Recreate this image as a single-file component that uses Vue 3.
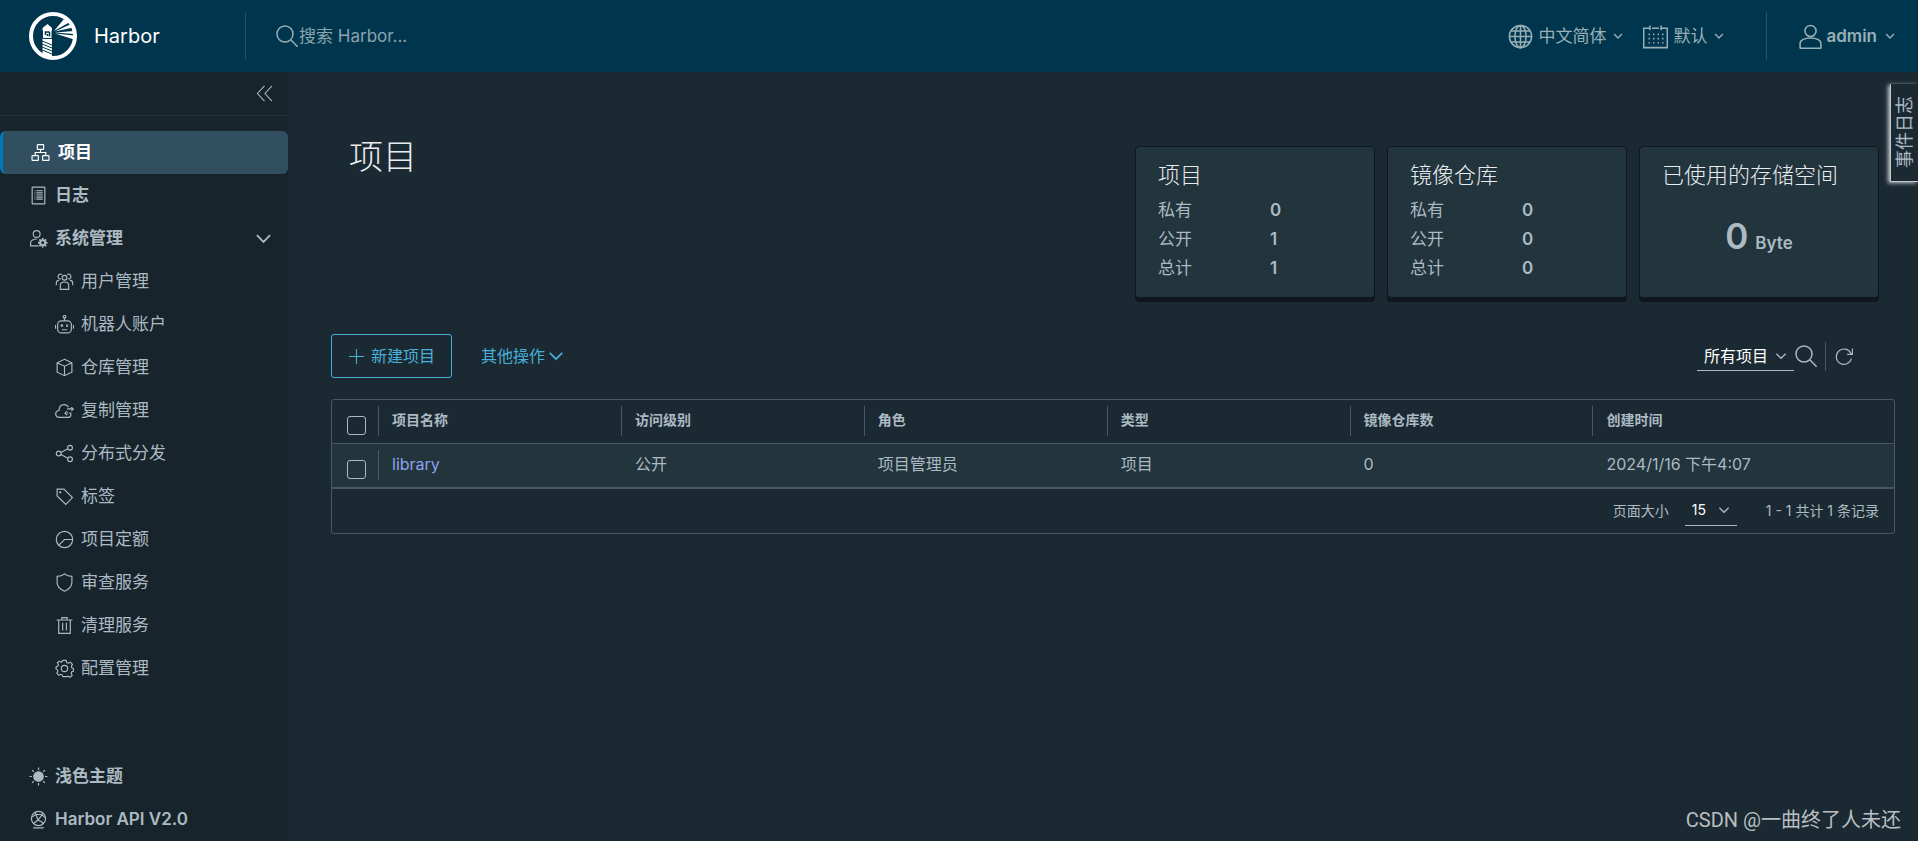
<script setup>
import { ref } from 'vue'

const icons = {
  organization:
    '<rect x="12" y="3" width="12" height="9" rx="1"/><rect x="2" y="24" width="12" height="9" rx="1"/><rect x="22" y="24" width="12" height="9" rx="1"/><path d="M18 12v6M8 24v-6h20v6"/>',
  log:
    '<rect x="6" y="2" width="24" height="32" rx="1"/><path d="M14 9h12M14 13h12M14 17h12M14 21h12M14 25h12M10.500 9h1.500M10.500 13h1.500M10.500 17h1.500M10.500 21h1.500M10.500 25h1.500"/>',
  admin:
    '<circle cx="14.500" cy="9.500" r="6.500"/><path d="M18 32H3v-6c0-4 6-7 12-7"/><circle cx="26" cy="26" r="4.500" stroke-width="3.500"/><path stroke-width="3.500" d="M26 17v4M26 31v4M17 26h4M31 26h4M19.600 19.600l3 3M29.400 29.400l3 3M19.600 32.400l3-3M29.400 22.600l3-3"/>',
  users:
    '<circle cx="18" cy="11" r="4.500"/><path d="M10 33v-8c0-4 3-6 8-6s8 2 8 6v8z"/><path d="M11 13a4.500 4.500 0 1 1 2-8M25 13a4.500 4.500 0 1 0-2-8M2.500 25v-4c0-3 2-5 5.500-5.500M33.500 25v-4c0-3-2-5-5.500-5.500"/>',
  robot:
    '<circle cx="18" cy="3.500" r="2.500"/><path d="M18 6v5M12 11h12a7 7 0 0 1 7 7v9a7 7 0 0 1-7 7H12a7 7 0 0 1-7-7v-9a7 7 0 0 1 7-7zM1 19v7M35 19v7M13 28h10"/><circle cx="13" cy="20" r="1.500"/><path d="M21.500 18l3 4M24.500 18l-3 4"/>',
  box:
    '<path d="M18 2.500l14 6.500v18l-14 6.500L4 27V9zM4 9l14 6.500L32 9M18 15.500v18"/>',
  cloud:
    '<path d="M30 22v4a5 5 0 0 1-5 5H8a6.500 6.500 0 0 1-.5-13C8 11 12 7 17 7c4 0 7 2 8.500 5"/><path d="M23 15h11M31 11.500l3.500 3.500-3.500 3.500M19 23h2M23 23h2M27 23h2M23 19.500L19 23l4 3.500"/>',
  share:
    '<circle cx="7" cy="18" r="4.500"/><circle cx="28.500" cy="7" r="4.500"/><circle cx="28.500" cy="29" r="4.500"/><path d="M11 16l13.500-7M11 20l13.500 7"/>',
  tag:
    '<path d="M4 4h13l16 16-12.500 13L4 17z"/><circle cx="10" cy="10" r="1"/>',
  quota:
    '<circle cx="18" cy="18" r="15.500"/><path d="M33.500 18H18L7 29"/>',
  shield:
    '<path d="M18 2c4 3 9 4.500 14 4.500V18c0 8-6 13-14 16.500C10 31 4 26 4 18V6.500C9 6.500 14 5 18 2z"/>',
  trash:
    '<path d="M3 7.500h30M7 7.500V33h22V7.500M13 7V3h10v4M14.500 13v14.500M21.500 13v14.500"/>',
  cog:
    '<circle cx="18" cy="18" r="6"/><path d="M15 2.500h6l1.500 4.500 2.500 1 4-2 4 4-2 4 1 3 3 1v5l-3.500 1.500-1 2.500 2 4-4 3.500-4-2-2.500 1L20 33.500h-5L13.500 30l-2.500-1-4 2-3.500-4 2-4-1-2.500L2 19v-4l3.500-1.500 1-2.500-2-4 4-3 3.500 2z"/>',
  sun:
    '<circle cx="18" cy="18" r="9" fill="currentColor"/><path d="M18 1v4.500M18 30.500V35M1 18h4.500M30.500 18H35M6 6l3 3M27 27l3 3M6 30l3-3M27 9l3-3"/>',
  api:
    '<circle cx="18" cy="16" r="13.500"/><path d="M5 14l8-6 12 1 6 6M13 8l4 11-9 7M25 9l-8 10 10 5M11 4l2 4M25 9l1-3M27 24l-2 3M8 34h20"/>',
  search: '<circle cx="15" cy="15" r="12"/><path d="M24 24l10 10"/>',
  globe:
    '<circle cx="18" cy="18" r="16"/><ellipse cx="18" cy="18" rx="8" ry="16"/><path d="M18 2v32M2 18h32M5 10h26M5 26h26"/>',
  calendar:
    '<path d="M9 6H1v28h34V6h-8M13 6h10M10 2v7M26 2v7"/><path stroke-dasharray="2 4.500" stroke-width="2.500" d="M8 15h22M8 21h22M8 27h22"/>',
  user:
    '<circle cx="18" cy="10" r="8"/><path d="M3 34v-6c0-5 7-8 15-8s15 3 15 8v6q0 1-1 1H4q-1 0-1-1z"/>',
  angle: '<path d="M4 11l14 14 14-14"/>',
  collapse: '<path d="M18 2L3 18l15 16M34 2L19 18l15 16"/>',
  plus: '<path d="M18 2v32M2 18h32"/>',
  refresh: '<path d="M31 22a14.500 14.500 0 1 1-1-10l3 2M33 3v11H23"/>',
}

const adminItems = [
  { icon: 'users', label: '用户管理' },
  { icon: 'robot', label: '机器人账户' },
  { icon: 'box', label: '仓库管理' },
  { icon: 'cloud', label: '复制管理' },
  { icon: 'share', label: '分布式分发' },
  { icon: 'tag', label: '标签' },
  { icon: 'quota', label: '项目定额' },
  { icon: 'shield', label: '审查服务' },
  { icon: 'trash', label: '清理服务' },
  { icon: 'cog', label: '配置管理' },
]

const stats = [
  { title: '项目', rows: [['私有', 0], ['公开', 1], ['总计', 1]] },
  { title: '镜像仓库', rows: [['私有', 0], ['公开', 0], ['总计', 0]] },
]

const columns = ['项目名称', '访问级别', '角色', '类型', '镜像仓库数', '创建时间']
const projects = [
  { name: 'library', access: '公开', role: '项目管理员', type: '项目', repos: 0, created: '2024/1/16 下午4:07' },
]

const adminOpen = ref(true)
const query = ref('')
const filter = ref('所有项目')
const pageSize = ref('15')
</script>

<template>
  <div class="app">
    <header class="topbar">
      <a class="brand" href="#">
        <svg class="logo" viewBox="0 0 48 48" aria-hidden="true">
          <circle cx="24" cy="24" r="22" fill="none" stroke="#fff" stroke-width="4" />
          <path fill="#fff" d="M18.500 12l4.500 4v2.500h-.5v7.500l.5 1v18h-9.500V27l.5-1v-7.500h-.5V16z" />
          <path fill="none" stroke="#00364d" stroke-width="1.500" d="M20.500 20H16.500v3M20.500 20v4.500M18.500 24v-2" />
          <path fill="none" stroke="#00364d" stroke-width="1" d="M14 26.500h9M13 29l10 4M13 32l10 4M13 35l10 4M13 38l10 4" />
          <path fill="#fff" d="M25 19L35 7l6 3zM26 19.500l16-7.500 2 3.500zM26 20.500l19-1.500v3zM26 21.500l19 2v4z" />
        </svg>
        <span>Harbor</span>
      </a>
      <label class="search">
        <svg class="ico ico-l" viewBox="0 0 36 36" aria-hidden="true" v-html="icons.search" />
        <input v-model="query" type="text" placeholder="搜索 Harbor..." aria-label="搜索 Harbor" />
      </label>
      <button class="menu" type="button">
        <svg class="ico ico-xl" viewBox="0 0 36 36" aria-hidden="true" v-html="icons.globe" />
        <span>中文简体</span>
        <svg class="ico caret" viewBox="0 0 36 36" aria-hidden="true" v-html="icons.angle" />
      </button>
      <button class="menu" type="button">
        <svg class="ico ico-xl" viewBox="0 0 36 36" aria-hidden="true" v-html="icons.calendar" />
        <span>默认</span>
        <svg class="ico caret" viewBox="0 0 36 36" aria-hidden="true" v-html="icons.angle" />
      </button>
      <div class="account">
        <button class="menu" type="button">
          <svg class="ico ico-xl" viewBox="0 0 36 36" aria-hidden="true" v-html="icons.user" />
          <span class="name">admin</span>
          <svg class="ico caret" viewBox="0 0 36 36" aria-hidden="true" v-html="icons.angle" />
        </button>
      </div>
    </header>

    <div class="body">
      <nav class="sidebar">
        <div class="collapse">
          <button type="button" aria-label="收起">
            <svg class="ico ico-s" viewBox="0 0 36 36" aria-hidden="true" v-html="icons.collapse" />
          </button>
        </div>
        <a class="item active" href="#">
          <svg class="ico" viewBox="0 0 36 36" aria-hidden="true" v-html="icons.organization" />
          <span>项目</span>
        </a>
        <a class="item" href="#">
          <svg class="ico" viewBox="0 0 36 36" aria-hidden="true" v-html="icons.log" />
          <span>日志</span>
        </a>
        <button class="item" type="button" :aria-expanded="adminOpen" @click="adminOpen = !adminOpen">
          <svg class="ico" viewBox="0 0 36 36" aria-hidden="true" v-html="icons.admin" />
          <span>系统管理</span>
          <svg class="ico ico-s bold end" viewBox="0 0 36 36" aria-hidden="true" v-html="icons.angle" />
        </button>
        <div v-show="adminOpen" class="sub">
          <a v-for="item in adminItems" :key="item.label" class="item child" href="#">
            <svg class="ico" viewBox="0 0 36 36" aria-hidden="true" v-html="icons[item.icon]" />
            <span>{{ item.label }}</span>
          </a>
        </div>
        <div class="foot">
          <button class="item" type="button">
            <svg class="ico" viewBox="0 0 36 36" aria-hidden="true" v-html="icons.sun" />
            <span>浅色主题</span>
          </button>
          <a class="item" href="#">
            <svg class="ico" viewBox="0 0 36 36" aria-hidden="true" v-html="icons.api" />
            <span>Harbor API V2.0</span>
          </a>
        </div>
      </nav>

      <main class="main">
        <section class="summary">
          <h1>项目</h1>
          <div class="cards">
            <article v-for="card in stats" :key="card.title" class="card">
              <h2>{{ card.title }}</h2>
              <dl>
                <template v-for="[label, value] in card.rows" :key="label">
                  <dt>{{ label }}</dt>
                  <dd>{{ value }}</dd>
                </template>
              </dl>
            </article>
            <article class="card">
              <h2>已使用的存储空间</h2>
              <p class="storage"><strong>0</strong><span>Byte</span></p>
            </article>
          </div>
        </section>

        <div class="toolbar">
          <button class="create" type="button">
            <svg class="ico ico-s" viewBox="0 0 36 36" aria-hidden="true" v-html="icons.plus" />
            <span>新建项目</span>
          </button>
          <button class="more" type="button">
            <span>其他操作</span>
            <svg class="ico ico-xs bold" viewBox="0 0 36 36" aria-hidden="true" v-html="icons.angle" />
          </button>
          <div class="tools">
            <div class="select filter">
              <select v-model="filter" aria-label="项目筛选">
                <option>所有项目</option>
              </select>
              <svg class="ico caret-m" viewBox="0 0 36 36" aria-hidden="true" v-html="icons.angle" />
            </div>
            <button type="button" aria-label="搜索">
              <svg class="ico ico-l" viewBox="0 0 36 36" aria-hidden="true" v-html="icons.search" />
            </button>
            <button class="refresh" type="button" aria-label="刷新">
              <svg class="ico" viewBox="0 0 36 36" aria-hidden="true" v-html="icons.refresh" />
            </button>
          </div>
        </div>

        <div class="grid">
          <table>
            <colgroup>
              <col class="c-check" />
              <col v-for="n in 5" :key="n" class="c-data" />
              <col />
            </colgroup>
            <thead>
              <tr>
                <th class="check"><input type="checkbox" aria-label="全选" /></th>
                <th v-for="c in columns" :key="c" scope="col">{{ c }}</th>
              </tr>
            </thead>
            <tbody>
              <tr v-for="p in projects" :key="p.name">
                <td class="check"><input type="checkbox" :aria-label="p.name" /></td>
                <td class="first"><a href="#">{{ p.name }}</a></td>
                <td>{{ p.access }}</td>
                <td>{{ p.role }}</td>
                <td>{{ p.type }}</td>
                <td>{{ p.repos }}</td>
                <td>{{ p.created }}</td>
              </tr>
            </tbody>
          </table>
          <div class="pager">
            <label for="page-size">页面大小</label>
            <div class="select size">
              <select id="page-size" v-model="pageSize">
                <option>15</option>
              </select>
              <svg class="ico caret-m" viewBox="0 0 36 36" aria-hidden="true" v-html="icons.angle" />
            </div>
            <span>1 - 1 共计 1 条记录</span>
          </div>
        </div>
      </main>
    </div>

    <button class="events" type="button">事件日志</button>
    <div class="watermark">CSDN @一曲终了人未还</div>
  </div>
</template>

<style>
body {
  margin: 0;
  background: #1b2a32;
}
</style>

<style scoped>
.app {
  position: relative;
  display: flex;
  flex-direction: column;
  min-height: 100vh;
  overflow: hidden;
  background: #1b2a32;
  color: #acbac3;
  font: 16px/24px Inter, "Noto Sans CJK SC", sans-serif;
}
*,
*::before {
  box-sizing: border-box;
}
a {
  color: inherit;
  text-decoration: none;
}
button {
  padding: 0;
  border: 0;
  background: none;
  color: inherit;
  font: inherit;
  cursor: pointer;
}
.ico {
  flex: none;
  display: block;
  width: 19px;
  height: 19px;
  fill: none;
  stroke: currentColor;
  stroke-width: 2.2;
}
.ico-xs { width: 16px; height: 16px; }
.ico-s { width: 17px; height: 17px; }
.ico-l { width: 24px; height: 24px; }
.ico-xl { width: 25px; height: 25px; }
.bold { stroke-width: 4; }
.caret { width: 10px; height: 10px; stroke-width: 5; }
.caret-m { width: 12px; height: 12px; stroke-width: 4; }

/* top bar */
.topbar {
  display: flex;
  align-items: center;
  height: 72px;
  padding-right: 23px;
  background: #00364d;
  color: #99afb8;
  font-size: 17px;
}
.brand {
  flex: none;
  display: flex;
  align-items: center;
  gap: 17px;
  width: 246px;
  height: 48px;
  padding-left: 29px;
  border-right: 1px solid #1f4f63;
  color: #fff;
  font-size: 20px;
}
.logo {
  width: 48px;
  height: 48px;
}
.search {
  flex: 1;
  display: flex;
  align-items: center;
  padding-left: 29px;
}
.search input {
  flex: 1;
  min-width: 0;
  padding: 0;
  border: 0;
  outline: 0;
  background: none;
  color: inherit;
  font: inherit;
}
.search input::placeholder {
  color: #8aa3ae;
  opacity: 1;
}
.menu {
  display: flex;
  align-items: center;
  gap: 5px;
  margin-left: 20px;
}
.menu .caret {
  margin-left: 2px;
}
.menu .name {
  font-weight: 600;
}
.account {
  display: flex;
  align-items: center;
  height: 48px;
  margin-left: 42px;
  border-left: 1px solid #27546a;
}
.account .menu {
  gap: 3px;
  margin-left: 31px;
}
.account .caret {
  margin-left: 5px;
}

/* sidebar */
.body {
  flex: 1;
  display: flex;
}
.sidebar {
  flex: none;
  display: flex;
  flex-direction: column;
  width: 288px;
  background: #17242b;
}
.collapse {
  display: flex;
  align-items: center;
  justify-content: flex-end;
  height: 44px;
  margin-bottom: 15px;
  padding: 0 15px;
  border-bottom: 1px solid #22333c;
}
.item {
  display: flex;
  align-items: center;
  gap: 7px;
  width: 100%;
  height: 43px;
  padding: 0 16px 1px 29px;
  font-size: 17px;
  font-weight: 600;
  text-align: left;
}
.active {
  gap: 8px;
  border-left: 3px solid #0079b8;
  border-radius: 6px;
  padding-left: 28px;
  background: #324f62;
  color: #fff;
}
.end {
  margin-left: auto;
}
.sub {
  padding: 0 0 1px;
}
.child {
  padding-left: 55px;
  font-weight: 400;
}
.foot {
  margin-top: auto;
}

/* content */
.main {
  flex: 1;
  min-width: 0;
  padding: 74px 23px 0 43px;
}
.summary {
  display: flex;
  align-items: flex-start;
  justify-content: space-between;
  padding: 0 16px 0 18px;
}
h1 {
  margin: 0;
  color: #e9ecef;
  font-size: 34px;
  font-weight: 300;
  line-height: 22px;
}
.cards {
  display: flex;
  gap: 12px;
}
.card {
  width: 240px;
  min-height: 152px;
  padding: 11px 22px;
  border: 1px solid #0f171c;
  border-radius: 4px;
  background: #22343c;
  box-shadow: 0 4px 0 #0f171c;
}
h2 {
  margin: 0 0 3px;
  color: #e9ecef;
  font-size: 22px;
  font-weight: 300;
  line-height: 34px;
  white-space: nowrap;
}
dl {
  display: grid;
  grid-template-columns: 112px 1fr;
  grid-auto-rows: 29px;
  align-items: center;
  margin: 0;
  font-size: 17px;
}
dd {
  margin: 0;
  font-weight: 600;
}
.storage {
  display: flex;
  align-items: baseline;
  justify-content: center;
  gap: 7px;
  margin: 20px 0 0;
  font-size: 17px;
  font-weight: 600;
  line-height: 48px;
}
.storage strong {
  font-size: 35px;
  font-weight: 600;
}

.toolbar {
  display: flex;
  align-items: center;
  margin: 36px 0 21px;
}
.create,
.more {
  display: flex;
  align-items: center;
  color: #49afd9;
  font-size: 16px;
}
.create {
  gap: 6px;
  height: 44px;
  padding: 0 16px;
  border: 1px solid #49afd9;
  border-radius: 3px;
}
.more {
  gap: 3px;
  margin-left: 29px;
}
.tools {
  display: flex;
  align-items: center;
  margin-left: auto;
  padding-right: 41px;
}
.select {
  display: grid;
  align-items: center;
  border-bottom: 1px solid #acbac3;
}
.select > * {
  grid-area: 1 / 1;
}
.select svg {
  justify-self: end;
  margin-right: 7px;
  pointer-events: none;
}
.select select {
  width: 100%;
  height: 29px;
  padding: 0 7px;
  appearance: none;
  border: 0;
  background: none;
  color: #fff;
  font: inherit;
}
.filter {
  width: 97px;
}
.refresh {
  display: flex;
  align-items: center;
  height: 29px;
  margin-left: 7px;
  padding-left: 9px;
  border-left: 1px solid #485764;
}

/* datagrid */
.grid {
  border: 1px solid #485764;
  border-radius: 3px;
}
table {
  width: 100%;
  table-layout: fixed;
  border-collapse: collapse;
}
.c-check { width: 46px; }
.c-data { width: 15.55%; }
th,
td {
  height: 44px;
  padding: 0 14px 2px;
  text-align: left;
}
th {
  height: 43px;
  border-bottom: 1px solid #485764;
  font-size: 14px;
  font-weight: 600;
}
th + th,
.first {
  background: linear-gradient(#485764, #485764) no-repeat left center / 1px 30px;
}
tbody tr {
  border-bottom: 2px solid #485764;
  background: #22343c;
}
td {
  height: 45px;
  font-size: 16px;
}
td a {
  color: #8fa2ed;
}
.check {
  padding: 9px 0 0 15px;
}
.check input {
  display: block;
  width: 19px;
  height: 19px;
  margin: 0;
  appearance: none;
  border: 1px solid #acbac3;
  border-radius: 3px;
}
.pager {
  display: flex;
  align-items: center;
  justify-content: flex-end;
  height: 44px;
  padding: 0 15px 1px 0;
  font-size: 14px;
}
.size {
  width: 52px;
  margin: 0 29px 0 16px;
}

/* overlays */
.events {
  position: absolute;
  top: 84px;
  right: 0;
  width: 28px;
  height: 98px;
  padding: 12px 0;
  border-top: 1px solid #c3c9cc;
  border-right: 1px solid #c3c9cc;
  box-shadow: 2px -1px 4px #c3c9cc;
  background: #1b2a32;
  font-size: 18px;
  line-height: 24px;
  writing-mode: vertical-rl;
  text-orientation: sideways;
  transform: rotate(180deg);
}
.watermark {
  position: absolute;
  right: 17px;
  bottom: 6px;
  color: #b9bfc2;
  font: 20px/30px Roboto, "Noto Sans CJK SC", sans-serif;
}
</style>
